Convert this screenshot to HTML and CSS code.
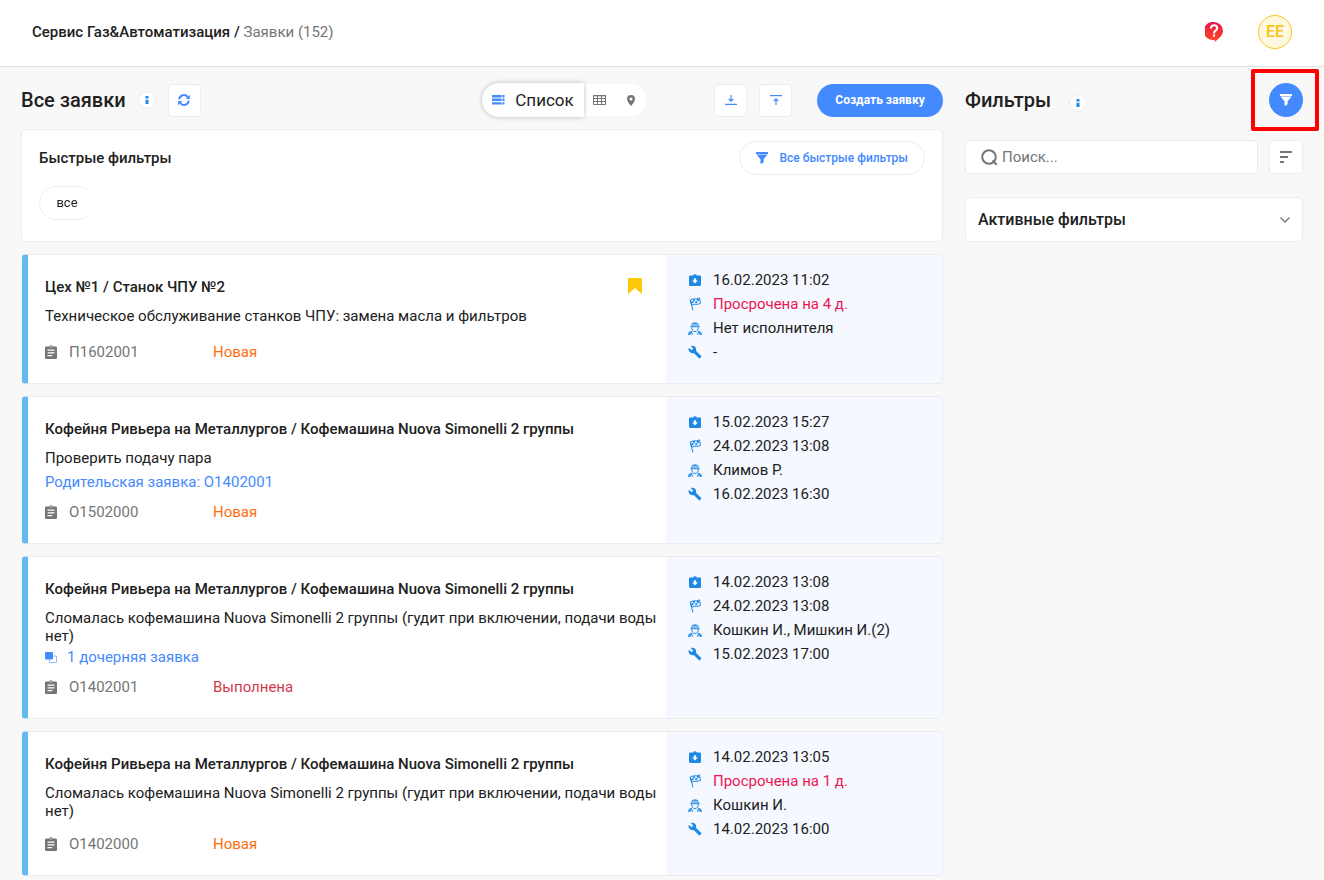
FILE: index.html
```html
<!DOCTYPE html>
<html lang="ru">
<head>
<meta charset="utf-8">
<meta name="viewport" content="width=device-width, initial-scale=1">
<title>Заявки</title>
<link rel="stylesheet" href="styles.css">
</head>
<body>
<svg class="sprite" aria-hidden="true">
  <symbol id="i-clip" viewBox="0 0 12 14"><path fill="currentColor" d="M1.3 1.5h3a1.8 1.8 0 0 1 3.4 0h3c.7 0 1.3.6 1.3 1.300v9.900c0 .7-.6 1.300-1.300 1.300H1.300C.6 14 0 13.400 0 12.700V2.800c0-.7.6-1.300 1.300-1.300z"/><path fill="none" stroke="#fff" stroke-width="1.300" d="M2.500 5.200h7M2.500 7.900h7M2.500 10.600h4.700"/><circle cx="6" cy="2" r=".7" fill="#fff"/></symbol>
  <symbol id="i-in" viewBox="0 0 12 12"><path fill="currentColor" d="M1.200 1.500h3a1.900 1.900 0 0 1 3.600 0h3c.7 0 1.200.5 1.200 1.200v8.100c0 .7-.5 1.200-1.200 1.200H1.200C.5 12 0 11.500 0 10.800V2.700c0-.7.5-1.200 1.200-1.200z"/><path fill="#fff" d="M4.900 4.300h2.200v2.200h1.800L6 9.500l-2.900-3h1.800z"/></symbol>
  <symbol id="i-flag" viewBox="0 0 12 14"><path fill="none" stroke="currentColor" d="M1 2.500l3 11M1.500 3.200C4 .8 6 3 10.500.9l1 5.500C8 8.500 6 6 2.700 8.200z"/><path fill="currentColor" d="M3.700 2l2 .2.400 2-2-.1zM7.700 2.200l2-.4.400 1.900-2 .5zM2.300 4.400l2-.4.400 2-2 .5zM6.100 4.200l2 0 .4 1.900-2 .1z"/></symbol>
  <symbol id="i-man" viewBox="0 0 14 13"><path fill="currentColor" d="M3 4.200C3 1.700 4.600.3 7 .3s4 1.400 4 3.900h.8v1H2.200v-1zM0 13c0-2.600.9-3.500 3.800-4.200l1.400 4.200H3.900V11.800H2.500V13zM14 13c0-2.600-.9-3.500-3.800-4.200L8.800 13h1.300V11.800h1.400V13z" opacity=".85"/><path fill="none" stroke="currentColor" d="M3.700 5.200c0 2.800 1.300 4.300 3.300 4.300s3.300-1.500 3.300-4.300"/><path stroke="#f5f8ff" stroke-width=".8" d="M4 3h6"/></symbol>
  <symbol id="i-wrench" viewBox="0 0 24 24"><path fill="currentColor" d="M22.700 19l-9.100-9.100c.9-2.300.4-5-1.500-6.900-2-2-5-2.400-7.400-1.300L9 6 6 9 1.600 4.700C.4 7.100.9 10.100 2.900 12.100c1.900 1.900 4.600 2.400 6.900 1.500l9.100 9.100c.4.400 1 .4 1.400 0l2.300-2.300c.5-.4.500-1.100.1-1.400z"/></symbol>
  <symbol id="i-funnel" viewBox="0 0 12 12"><path fill="currentColor" d="M0 0h12v2H0zM.5 2.600h11L7.600 7.300v3.200L4.500 12V7.300z"/></symbol>
  <symbol id="i-info" viewBox="0 0 4 8"><path fill="currentColor" d="M.5 0h3v2.500h-3zM.5 3.800h3V8h-3z"/></symbol>
</svg>

<header class="topbar">
  <nav class="crumbs"><span class="crumbs-org">Сервис Газ&amp;Автоматизация /</span> <a class="crumbs-page" href="#">Заявки (152)</a></nav>
  <div class="topbar-user">
    <button class="help" aria-label="Помощь">
      <svg width="18" height="20" viewBox="0 0 18 20"><defs><linearGradient id="hg" x1="0" y1="0" x2="0" y2="1"><stop offset="0" stop-color="#ea1550"/><stop offset="1" stop-color="#fb4a20"/></linearGradient></defs><path fill="url(#hg)" d="M9 0a9 9 0 0 1 9 8.800c0 3.400-1.900 5.700-4 7.400-1.600 1.300-3 2.500-4.200 3.700l-.2-2.200A9 9 0 1 1 9 0z"/><path fill="none" stroke="#fff" stroke-width="2.100" d="M5.800 6.500C5.800 4.500 7.200 3.300 9 3.300s3.200 1.200 3.200 2.900C12.200 8.500 9 8.400 9 11.400"/><path fill="#fff" d="M7.900 12.600h2.200v2H7.900z"/></svg>
    </button>
    <button class="avatar">ЕЕ</button>
  </div>
</header>

<div class="page">
  <main class="main">
    <div class="toolbar">
      <h1 class="heading">Все заявки</h1>
      <button class="info" aria-label="Справка"><svg width="4" height="8"><use href="#i-info"/></svg></button>
      <button class="square refresh" aria-label="Обновить"><svg width="12" height="12" viewBox="0 0 12 12"><path fill="none" stroke="currentColor" stroke-width="1.900" d="M1.200 5.300A4.800 4.800 0 0 1 9.800 3M10.800 6.700A4.800 4.800 0 0 1 2.200 9"/><path fill="currentColor" d="M11.900.8v4.300H7.600zM.1 11.200V6.900h4.300z"/></svg></button>
      <div class="views">
        <button class="view view-active"><svg width="13" height="10" viewBox="0 0 13 10"><path fill="currentColor" d="M0 0h9.500v2.400H0zM10.300 0H12.500v2.400h-2.200zM0 3.600h9.500V6H0zM10.300 3.600H12.500V6h-2.200zM0 7.200h9.500v2.400H0zM10.300 7.200H12.500v2.400h-2.200z"/></svg>Список</button>
        <button class="view" aria-label="Таблица"><svg width="13" height="10" viewBox="0 0 13 10"><path fill="none" stroke="currentColor" d="M.5.5h12v9H.5zM.5 3.500h12M.5 6.500h12M4.500 0v10M8.500 0v10"/><path stroke="currentColor" d="M0 .8h13"/></svg></button>
        <button class="view" aria-label="Карта"><svg width="8" height="11" viewBox="0 0 8 11"><path fill="currentColor" fill-rule="evenodd" d="M4 0a4 4 0 0 1 4 4c0 2.800-4 7-4 7S0 6.800 0 4a4 4 0 0 1 4-4zm0 2.500a1.500 1.500 0 1 0 0 3 1.500 1.500 0 0 0 0-3z"/></svg></button>
      </div>
      <div class="actions">
        <button class="square" aria-label="Скачать"><svg width="12" height="10" viewBox="0 0 12 10"><path fill="none" stroke="currentColor" stroke-width="1.200" d="M0 9.300h12M6 0v6M3.800 4L6 6.200 8.200 4"/></svg></button>
        <button class="square" aria-label="Загрузить"><svg width="12" height="10" viewBox="0 0 12 10"><path fill="none" stroke="currentColor" stroke-width="1.200" d="M0 .7h12M6 10V4M3.800 6L6 3.800 8.200 6"/></svg></button>
        <button class="create">Создать заявку</button>
      </div>
    </div>

    <section class="quick">
      <div class="quick-head">
        <h2 class="quick-title">Быстрые фильтры</h2>
        <button class="quick-all"><svg width="12" height="12"><use href="#i-funnel"/></svg>Все быстрые фильтры</button>
      </div>
      <button class="chip">все</button>
    </section>

    <article class="card">
      <div class="card-body">
        <div class="card-top"><h3 class="card-title">Цех №1 / Станок ЧПУ №2</h3><svg class="bookmark" width="14" height="16" viewBox="0 0 14 16"><path fill="#fbc905" d="M1 0h12l1 1v15l-7-6-7 6V1z"/></svg></div>
        <p class="card-text">Техническое обслуживание станков ЧПУ: замена масла и фильтров</p>
        <div class="card-foot"><span class="number"><svg width="12" height="14"><use href="#i-clip"/></svg>П1602001</span><span class="status">Новая</span></div>
      </div>
      <ul class="facts">
        <li class="fact"><svg width="14" height="12"><use href="#i-in"/></svg>16.02.2023 11:02</li>
        <li class="fact fact-late"><svg width="14" height="14"><use href="#i-flag"/></svg>Просрочена на 4 д.</li>
        <li class="fact"><svg width="14" height="13"><use href="#i-man"/></svg>Нет исполнителя</li>
        <li class="fact"><svg width="14" height="14"><use href="#i-wrench"/></svg>-</li>
      </ul>
    </article>

    <article class="card">
      <div class="card-body">
        <div class="card-top"><h3 class="card-title">Кофейня Ривьера на Металлургов / Кофемашина Nuova Simonelli 2 группы</h3></div>
        <p class="card-text">Проверить подачу пара</p>
        <a class="related" href="#">Родительская заявка: О1402001</a>
        <div class="card-foot"><span class="number"><svg width="12" height="14"><use href="#i-clip"/></svg>О1502000</span><span class="status">Новая</span></div>
      </div>
      <ul class="facts">
        <li class="fact"><svg width="14" height="12"><use href="#i-in"/></svg>15.02.2023 15:27</li>
        <li class="fact"><svg width="14" height="14"><use href="#i-flag"/></svg>24.02.2023 13:08</li>
        <li class="fact"><svg width="14" height="13"><use href="#i-man"/></svg>Климов Р.</li>
        <li class="fact"><svg width="14" height="14"><use href="#i-wrench"/></svg>16.02.2023 16:30</li>
      </ul>
    </article>

    <article class="card">
      <div class="card-body">
        <div class="card-top"><h3 class="card-title">Кофейня Ривьера на Металлургов / Кофемашина Nuova Simonelli 2 группы</h3></div>
        <p class="card-text">Сломалась кофемашина Nuova Simonelli 2 группы (гудит при включении, подачи воды нет)</p>
        <a class="related" href="#"><svg width="12" height="11" viewBox="0 0 12 11"><path fill="none" stroke="#9cc0ff" d="M8 4h3.500v6.500H4.500V8"/><rect width="8" height="7.500" rx="1" fill="#448aff"/></svg>1 дочерняя заявка</a>
        <div class="card-foot"><span class="number"><svg width="12" height="14"><use href="#i-clip"/></svg>О1402001</span><span class="status status-done">Выполнена</span></div>
      </div>
      <ul class="facts">
        <li class="fact"><svg width="14" height="12"><use href="#i-in"/></svg>14.02.2023 13:08</li>
        <li class="fact"><svg width="14" height="14"><use href="#i-flag"/></svg>24.02.2023 13:08</li>
        <li class="fact"><svg width="14" height="13"><use href="#i-man"/></svg>Кошкин И., Мишкин И.(2)</li>
        <li class="fact"><svg width="14" height="14"><use href="#i-wrench"/></svg>15.02.2023 17:00</li>
      </ul>
    </article>

    <article class="card">
      <div class="card-body">
        <div class="card-top"><h3 class="card-title">Кофейня Ривьера на Металлургов / Кофемашина Nuova Simonelli 2 группы</h3></div>
        <p class="card-text">Сломалась кофемашина Nuova Simonelli 2 группы (гудит при включении, подачи воды нет)</p>
        <div class="card-foot"><span class="number"><svg width="12" height="14"><use href="#i-clip"/></svg>О1402000</span><span class="status">Новая</span></div>
      </div>
      <ul class="facts">
        <li class="fact"><svg width="14" height="12"><use href="#i-in"/></svg>14.02.2023 13:05</li>
        <li class="fact fact-late"><svg width="14" height="14"><use href="#i-flag"/></svg>Просрочена на 1 д.</li>
        <li class="fact"><svg width="14" height="13"><use href="#i-man"/></svg>Кошкин И.</li>
        <li class="fact"><svg width="14" height="14"><use href="#i-wrench"/></svg>14.02.2023 16:00</li>
      </ul>
    </article>
  </main>

  <aside class="side">
    <div class="side-head">
      <h2 class="heading">Фильтры</h2>
      <button class="info" aria-label="Справка по фильтрам"><svg width="4" height="8"><use href="#i-info"/></svg></button>
      <div class="toggle-wrap"><button class="toggle" aria-label="Скрыть фильтры"><svg width="12" height="12"><use href="#i-funnel"/></svg></button></div>
    </div>
    <div class="side-search">
      <label class="search">
        <svg width="17" height="17" viewBox="0 0 17 17"><g fill="none" stroke="#757575" stroke-width="2"><circle cx="8" cy="8" r="6.800"/><path d="M11.500 11.500l4.300 4.300"/></g></svg>
        <input class="search-input" type="text" placeholder="Поиск..." aria-label="Поиск">
      </label>
      <button class="square sort" aria-label="Сортировка"><svg width="12" height="12" viewBox="0 0 12 12"><path fill="currentColor" d="M0 0h12v2H0zM0 5h8v2H0zM0 10h4v2H0z"/></svg></button>
    </div>
    <button class="panel">Активные фильтры<svg width="10" height="6" viewBox="0 0 10 6"><path fill="none" stroke="#757575" stroke-width="1.400" d="M.5.5L5 5 9.500.5"/></svg></button>
  </aside>
</div>
</body>
</html>
```
FILE: styles.css
```css
* { box-sizing: border-box; }

body {
  margin: 0;
  min-height: 100vh;
  background: #f8f8f8;
  color: #212121;
  font: 400 15px/18px Roboto, sans-serif;
}

h1, h2, h3, p, ul { margin: 0; padding: 0; font: inherit; }
ul { list-style: none; }
a { color: inherit; text-decoration: none; }
svg { flex: none; }
button, input { margin: 0; padding: 0; border: 0; background: none; color: inherit; font: inherit; }
button { display: flex; align-items: center; justify-content: center; cursor: pointer; }
.sprite { display: none; }

.topbar {
  display: flex;
  align-items: center;
  justify-content: space-between;
  height: 67px;
  padding: 0 32px 3px;
  background: #fff;
  border-bottom: 1px solid #e0e0e0;
}
.crumbs-org { font-weight: 500; }
.crumbs-page { color: #757575; }
.topbar-user { display: flex; align-items: center; gap: 35px; }
.avatar {
  width: 34px;
  height: 34px;
  border: 1px solid #f8cb12;
  border-radius: 50%;
  background: #fef8e3;
  color: #f5c510;
  font-size: 16px;
  font-weight: 500;
}

.page {
  display: grid;
  grid-template-columns: minmax(0, 1fr) 338px;
  gap: 22px;
  padding: 16px 21px 0;
}
.main { display: flex; flex-direction: column; gap: 12px; }

.toolbar { display: flex; align-items: center; height: 34px; }
.heading { font-size: 20px; line-height: 24px; font-weight: 500; }
.info {
  width: 18px;
  height: 18px;
  margin-left: 12px;
  border: 1px solid #ececec;
  border-radius: 50%;
  background: #fff;
  color: #1e88e5;
}
.square {
  width: 33px;
  height: 33px;
  border: 1px solid #ececec;
  border-radius: 4px;
  background: #fff;
  color: #448aff;
}
.refresh { margin-left: 12px; }

.views {
  display: flex;
  align-items: center;
  height: 32px;
  margin-left: auto;
  border-radius: 17px;
  background: #fff;
  color: #757575;
}
.view { height: 32px; width: 31px; }
.view-active {
  width: 102px;
  height: 34px;
  gap: 10px;
  border-radius: 17px 0 0 17px;
  background: #fff;
  box-shadow: 0 0 5px rgba(0, 0, 0, .25);
  color: #212121;
  font-size: 17px;
}
.view-active svg { color: #448aff; }

.actions { display: flex; gap: 12px; margin-left: 68px; }
.create {
  width: 126px;
  height: 33px;
  margin-left: 13px;
  border-radius: 17px;
  background: #448aff;
  color: #fff;
  font-size: 12px;
  font-weight: 700;
}

.quick {
  padding: 11px 17px 21px;
  border: 1px solid #ececec;
  border-radius: 5px;
  background: #fff;
}
.quick-head { display: flex; align-items: center; justify-content: space-between; margin-bottom: 11px; }
.quick-title { font-weight: 500; }
.quick-all {
  gap: 11px;
  height: 34px;
  padding: 0 16px;
  border: 1px solid #ececec;
  border-radius: 17px;
  color: #448aff;
  font-size: 12px;
  font-weight: 500;
}
.chip {
  width: 56px;
  height: 34px;
  border: 1px solid #ececec;
  border-radius: 17px;
  font-size: 13px;
  -webkit-mask-image: linear-gradient(to right, #000 75%, transparent);
  mask-image: linear-gradient(to right, #000 75%, transparent);
}

.card {
  display: grid;
  grid-template-columns: minmax(0, 1fr) 276px;
  overflow: hidden;
  margin-left: 1px;
  border: 1px solid #ececec;
  border-left: 6px solid #5fbbef;
  border-radius: 4px;
  background: #fff;
}
.card-body { padding: 23px 8px 22px 17px; }
.card-top { display: flex; justify-content: space-between; margin-bottom: 11px; }
.card-title { font-weight: 500; }
.bookmark { margin-right: 16px; }
.card-text { min-height: 21px; }
.card-foot { display: flex; margin-top: 15px; }
.related { display: flex; align-items: center; gap: 10px; margin-top: 3px; color: #448aff; }
.related + .card-foot { margin-top: 12px; }
.number { display: flex; align-items: center; gap: 12px; width: 168px; color: #757575; }
.status { color: #ff6d0c; }
.status-done { color: #d3394c; }

.facts { padding: 13px 12px 13px 22px; background: #f5f8ff; }
.fact { display: flex; align-items: center; gap: 11px; line-height: 24px; }
.fact svg { color: #1e88e5; }
.fact-late { color: #ec1651; }

.side-head { display: flex; align-items: center; height: 34px; }
.side-head .info { margin-left: 18px; margin-top: 5px; }
.toggle-wrap { position: relative; margin-left: auto; }
.toggle {
  width: 34px;
  height: 34px;
  border-radius: 17px;
  background: #448aff;
  color: #fff;
}
.toggle-wrap::after {
  content: "";
  position: absolute;
  inset: -14px -16px -14px -18px;
  border: 4px solid #f00;
  border-radius: 2px;
  pointer-events: none;
}
.side-search { display: flex; gap: 11px; margin-top: 23px; }
.search {
  display: flex;
  flex: 1;
  align-items: center;
  gap: 4px;
  height: 34px;
  padding: 0 15px;
  border: 1px solid #ececec;
  border-radius: 4px;
  background: #fff;
}
.search-input { flex: 1; min-width: 0; outline: 0; }
.search-input::placeholder { color: #757575; opacity: 1; }
.sort { width: 34px; height: 34px; color: #757575; }
.panel {
  justify-content: space-between;
  width: 100%;
  height: 45px;
  margin-top: 23px;
  padding: 0 12px;
  border: 1px solid #ececec;
  border-radius: 5px;
  background: #fff;
  font-size: 16px;
  font-weight: 500;
}
```
